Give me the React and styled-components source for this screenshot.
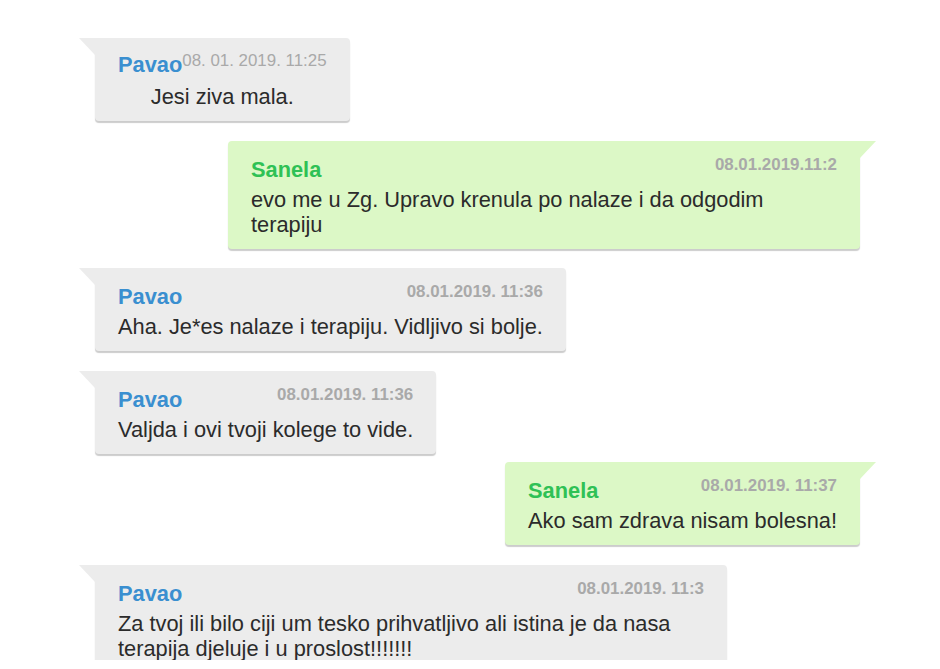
import React from 'react';
import styled, { createGlobalStyle, css } from 'styled-components';

const GlobalStyle = createGlobalStyle`
  html, body {
    margin: 0;
    padding: 0;
    background: #fff;
  }
  body {
    font-family: "Liberation Sans", Arial, sans-serif;
  }
`;

const messages = [
  { id: 1, from: 'Pavao', date: '08. 01. 2019. 11:25', text: 'Jesi ziva mala.', compact: true },
  { id: 2, from: 'Sanela', date: '08.01.2019.11:2', text: 'evo me u Zg. Upravo krenula po nalaze i da odgodim terapiju', mine: true, gap: 20 },
  { id: 3, from: 'Pavao', date: '08.01.2019. 11:36', text: 'Aha. Je*es nalaze i terapiju. Vidljivo si bolje.', gap: 19 },
  { id: 4, from: 'Pavao', date: '08.01.2019. 11:36', text: 'Valjda i ovi tvoji kolege to vide.', gap: 20 },
  { id: 5, from: 'Sanela', date: '08.01.2019. 11:37', text: 'Ako sam zdrava nisam bolesna!', mine: true, gap: 8 },
  { id: 6, from: 'Pavao', date: '08.01.2019. 11:3', text: 'Za tvoj ili bilo ciji um tesko prihvatljivo ali istina je da nasa terapija djeluje i u proslost!!!!!!!', gap: 20 },
];

const App = () => {
  return (
    <>
      <GlobalStyle />
      <Chat>
        {messages.map((m) => (
          <Bubble key={m.id} $mine={m.mine} $gap={m.gap || 0}>
            {m.compact ? (
              <>
                <InlineHeader>
                  <Name $mine={m.mine}>{m.from}</Name>
                  <SupDate>{m.date}</SupDate>
                </InlineHeader>
                <Body $center>{m.text}</Body>
              </>
            ) : (
              <>
                <Header>
                  <Name $mine={m.mine} $shift={2}>{m.from}</Name>
                  <Date>{m.date}</Date>
                </Header>
                <Body>{m.text}</Body>
              </>
            )}
          </Bubble>
        ))}
      </Chat>
    </>
  );
};

const Chat = styled.div`
  height: 660px;
  overflow: hidden;
  box-sizing: border-box;
  padding: 38px 80px 0 95px;
  display: flex;
  flex-direction: column;
  align-items: flex-start;
`;

const Bubble = styled.div`
  position: relative;
  box-sizing: border-box;
  max-width: 632px;
  margin-top: ${(p) => p.$gap}px;
  padding: 13px 23px 12px;
  background: ${(p) => (p.$mine ? '#dcf8c6' : '#ececec')};
  box-shadow: 0 2px 1px rgba(0, 0, 0, 0.2);
  border-radius: ${(p) => (p.$mine ? '4px 0 4px 4px' : '0 4px 4px 4px')};
  flex-shrink: 0;

  ${(p) =>
    p.$mine &&
    css`
      align-self: flex-end;
    `}

  &::before {
    content: '';
    position: absolute;
    top: 0;
    width: 0;
    height: 0;
    border-top: 17px solid ${(p) => (p.$mine ? '#dcf8c6' : '#ececec')};
    ${(p) =>
      p.$mine
        ? css`
            right: -16px;
            border-right: 16px solid transparent;
          `
        : css`
            left: -16px;
            border-left: 16px solid transparent;
          `}
  }
`;

const Header = styled.div`
  display: flex;
  justify-content: space-between;
  align-items: flex-start;
  gap: 40px;
  height: 28px;
`;

const InlineHeader = styled.div`
  display: flex;
  align-items: flex-start;
  height: 28px;
`;

const Name = styled.span`
  margin-top: ${(p) => p.$shift || 0}px;
  font-size: 21.8px;
  line-height: 28px;
  font-weight: bold;
  color: ${(p) => (p.$mine ? '#2fc155' : '#3a8fd0')};
`;

const Date = styled.span`
  margin-top: 1px;
  font-size: 16.9px;
  line-height: 20px;
  font-weight: bold;
  color: #a9a9a9;
  white-space: nowrap;
`;

const SupDate = styled.span`
  font-size: 16.9px;
  line-height: 20px;
  color: #a9a9a9;
  white-space: nowrap;
`;

const Body = styled.div`
  margin-top: 5px;
  font-size: 21.8px;
  line-height: 25px;
  color: #2b2b2b;
  text-align: ${(p) => (p.$center ? 'center' : 'left')};
`;

export default App;
